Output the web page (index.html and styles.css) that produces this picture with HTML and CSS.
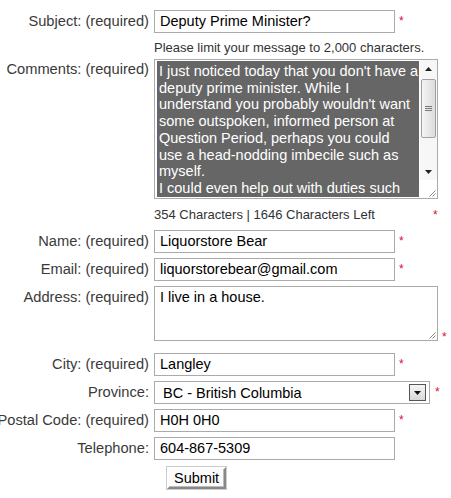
FILE: index.html
```html
<!DOCTYPE html>
<html>
<head>
<meta charset="utf-8">
<link rel="stylesheet" href="styles.css">
</head>
<body>
<form class="form">
  <div class="row row-subject">
    <div class="label">Subject: (required)</div>
    <div class="field"><div class="input">Deputy Prime Minister?</div><span class="req">*</span></div>
  </div>
  <div class="row row-hint">
    <div class="label"></div>
    <div class="field hint">Please limit your message to 2,000 characters.</div>
  </div>
  <div class="row row-comments">
    <div class="label">Comments: (required)</div>
    <div class="field">
      <div class="textarea comments">
        <div class="ta-text">I just noticed today that you don't have a<br>deputy prime minister. While I<br>understand you probably wouldn't want<br>some outspoken, informed person at<br>Question Period, perhaps you could<br>use a head-nodding imbecile such as<br>myself.<br>I could even help out with duties such</div>
        <div class="scrollbar">
          <div class="sb-btn"><svg width="7" height="4" viewBox="0 0 7 4"><path d="M0 4h7L3.5 0z" fill="#222"/></svg></div>
          <div class="sb-track">
            <div class="sb-thumb"><svg width="7" height="6" viewBox="0 0 7 6"><path d="M0 .5h7M0 2.5h7M0 4.5h7" stroke="#777" stroke-width="1"/></svg></div>
          </div>
          <div class="sb-btn"><svg width="7" height="4" viewBox="0 0 7 4"><path d="M0 0h7L3.5 4z" fill="#222"/></svg></div>
          <div class="sb-corner"><svg width="9" height="9" viewBox="0 0 9 9"><path d="M8.5 2.5L2.5 8.5M8.5 5.5L5.5 8.5" stroke="#888" stroke-width="1"/></svg></div>
        </div>
      </div>
    </div>
  </div>
  <div class="row row-count">
    <div class="label"></div>
    <div class="field count"><span>354 Characters | 1646 Characters Left</span><span class="req">*</span></div>
  </div>
  <div class="row">
    <div class="label">Name: (required)</div>
    <div class="field"><div class="input">Liquorstore Bear</div><span class="req">*</span></div>
  </div>
  <div class="row">
    <div class="label">Email: (required)</div>
    <div class="field"><div class="input">liquorstorebear@gmail.com</div><span class="req">*</span></div>
  </div>
  <div class="row row-address">
    <div class="label">Address: (required)</div>
    <div class="field field-bottom"><div class="textarea address"><div class="addr-text">I live in a house.</div><svg class="grip" width="9" height="9" viewBox="0 0 9 9"><path d="M8.5 2.5L2.5 8.5M8.5 5.5L5.5 8.5" stroke="#888" stroke-width="1"/></svg></div><span class="req req-low">*</span></div>
  </div>
  <div class="row row-city">
    <div class="label">City: (required)</div>
    <div class="field"><div class="input">Langley</div><span class="req">*</span></div>
  </div>
  <div class="row">
    <div class="label">Province:</div>
    <div class="field"><div class="select"><span class="sel-text">BC - British Columbia</span><span class="sel-btn"><svg width="7" height="4" viewBox="0 0 7 4"><path d="M0 0h7L3.5 4z" fill="#111"/></svg></span></div><span class="req req-sel">*</span></div>
  </div>
  <div class="row">
    <div class="label">Postal Code: (required)</div>
    <div class="field"><div class="input">H0H 0H0</div><span class="req">*</span></div>
  </div>
  <div class="row">
    <div class="label">Telephone:</div>
    <div class="field"><div class="input">604-867-5309</div></div>
  </div>
  <div class="row row-submit">
    <div class="label"></div>
    <div class="field"><button type="button" class="submit">Submit</button></div>
  </div>
</form>
</body>
</html>
```
FILE: styles.css
```css
html, body {
  margin: 0;
  padding: 0;
  background: #fff;
}
body {
  font-family: "Liberation Sans", Arial, sans-serif;
  font-size: 14.5px;
  color: #333;
}
.form {
  padding-top: 10px;
}
.row {
  display: flex;
  align-items: flex-start;
  margin-bottom: 5px;
}
.label {
  width: 154px;
  flex: 0 0 154px;
  display: flex;
  justify-content: flex-end;
  white-space: nowrap;
  line-height: 23px;
  font-size: 14.67px;
  color: #3a3a3a;
  padding-right: 5px;
  box-sizing: border-box;
}
.field {
  display: flex;
  align-items: flex-start;
}
.input {
  box-sizing: border-box;
  width: 241px;
  height: 23px;
  border: 1px solid #aaa;
  padding: 0 5px;
  line-height: 21px;
  color: #000;
  white-space: nowrap;
}
.req {
  color: #d8102a;
  font-size: 12px;
  line-height: 12px;
  margin-left: 4px;
  margin-top: 5px;
}
.row-hint {
  margin-top: 7px;
  margin-bottom: 4px;
}
.hint {
  font-size: 13px;
  line-height: 15px;
  color: #333;
}
.row-comments .label {
  line-height: 20px;
}
.textarea {
  box-sizing: border-box;
  border: 1px solid #aaa;
  color: #000;
}
.comments {
  width: 284px;
  height: 140px;
  display: flex;
}
.ta-text {
  flex: 1;
  margin: 1px 1px 1px 2px;
  background: #666;
  color: #fff;
  line-height: 16.7px;
  padding: 2px 0 0 2px;
  overflow: hidden;
  white-space: nowrap;
}
.scrollbar {
  width: 17px;
  flex: 0 0 17px;
  display: flex;
  flex-direction: column;
  background: #f7f7f7;
}
.sb-btn {
  height: 17px;
  display: flex;
  align-items: center;
  justify-content: center;
}
.sb-track {
  flex: 1;
  padding: 2px 1px 0 1px;
}
.sb-thumb {
  height: 59px;
  border: 1px solid #a0a0a0;
  border-radius: 2px;
  background: linear-gradient(to right, #f4f4f4, #dcdcdc);
  display: flex;
  align-items: center;
  justify-content: center;
  box-sizing: border-box;
}
.sb-corner {
  height: 18px;
  background: #fff;
  display: flex;
  align-items: flex-end;
  justify-content: flex-end;
  padding: 0 1px 1px 0;
  box-sizing: border-box;
}
.row-count {
  margin-top: 8px;
  margin-bottom: 8px;
}
.count {
  font-size: 13px;
  line-height: 15px;
  color: #333;
}
.count .req {
  margin-left: 58px;
  margin-top: 2px;
}
.address {
  width: 284px;
  height: 55px;
  position: relative;
  padding: 2px 5px;
}
.addr-text {
  line-height: 17px;
}
.grip {
  position: absolute;
  right: 1px;
  bottom: 1px;
}
.req-low {
  margin-left: 4px;
  margin-top: 45px;
}
.row-address {
  margin-bottom: 10px;
}
.select {
  box-sizing: border-box;
  width: 276px;
  height: 23px;
  border: 1px solid #aaa;
  display: flex;
  align-items: center;
  justify-content: space-between;
  color: #000;
  padding-left: 8px;
  padding-right: 3px;
}
.sel-btn {
  width: 17px;
  height: 17px;
  box-sizing: border-box;
  border: 1px solid #555;
  background: linear-gradient(#f5f5f5, #d8d8d8);
  display: flex;
  align-items: center;
  justify-content: center;
}
.req-sel {
  margin-left: 5px;
}
.row-submit {
  margin-top: 7px;
}
.submit {
  margin-left: 13px;
  font-family: "Liberation Sans", Arial, sans-serif;
  font-size: 14.5px;
  color: #000;
  background: #fbfbfb;
  border: 2px solid;
  border-color: #fff #888 #888 #fff;
  box-shadow: inset -1px -1px 0 #bbb;
  outline: 1px solid #ccc;
  height: 22px;
  padding: 0 5px;
  line-height: 18px;
}
```
